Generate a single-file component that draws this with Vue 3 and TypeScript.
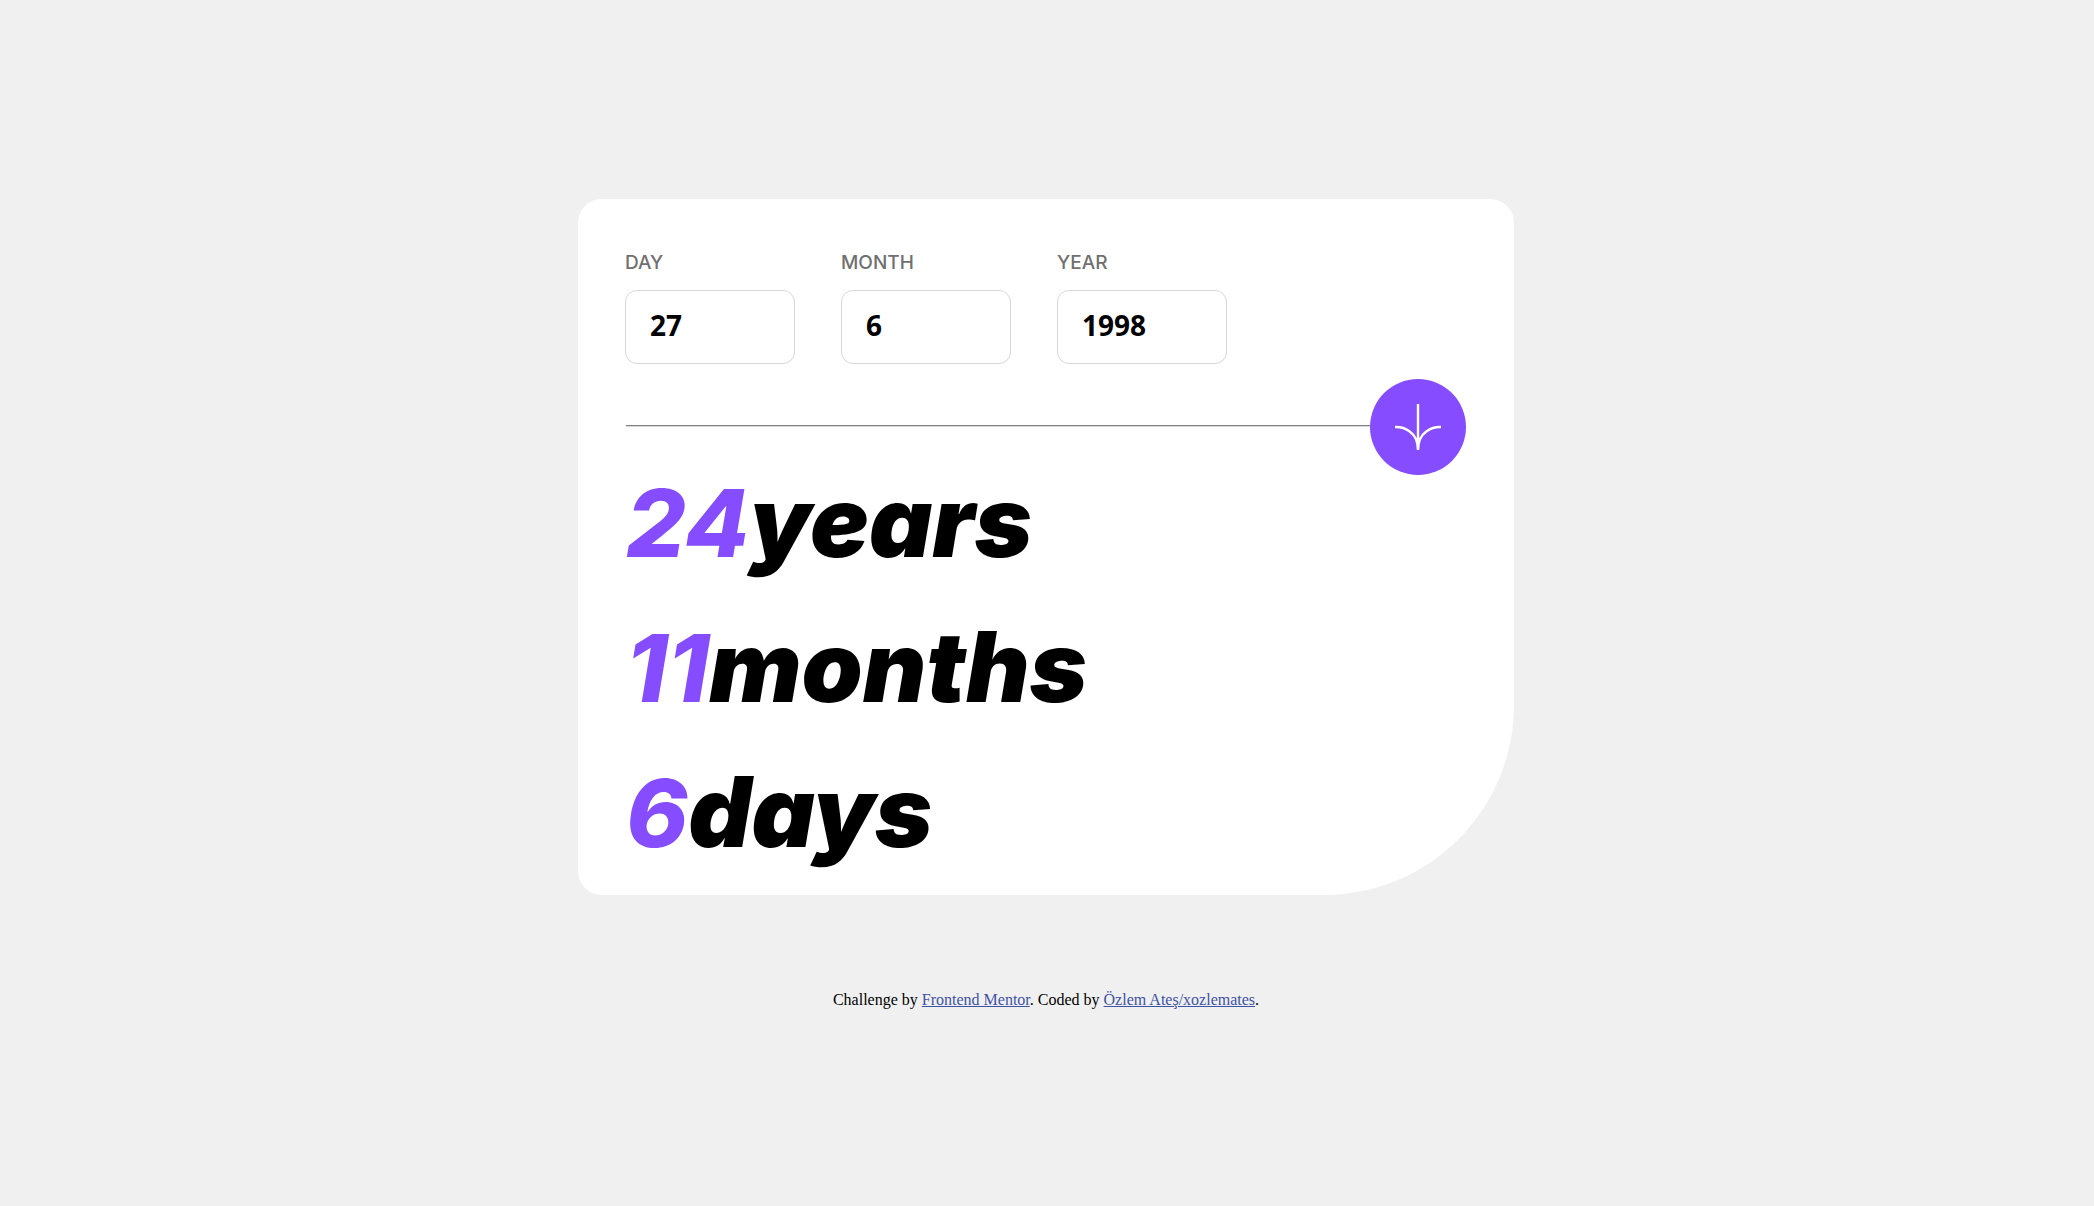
<script setup lang="ts">
import { reactive, ref } from 'vue'

interface Field {
  id: 'day' | 'month' | 'year'
  label: string
}

interface AgePart {
  unit: string
  value: number
}

const fields: Field[] = [
  { id: 'day', label: 'DAY' },
  { id: 'month', label: 'MONTH' },
  { id: 'year', label: 'YEAR' },
]

const birth = reactive({ day: '27', month: '6', year: '1998' })

const age = ref<AgePart[]>([
  { unit: 'years', value: 24 },
  { unit: 'months', value: 11 },
  { unit: 'days', value: 6 },
])

function calculate(): void {
  const now = new Date()
  let years = now.getFullYear() - Number(birth.year)
  let months = now.getMonth() + 1 - Number(birth.month)
  let days = now.getDate() - Number(birth.day)
  if (days < 0) {
    months -= 1
    days += new Date(now.getFullYear(), now.getMonth(), 0).getDate()
  }
  if (months < 0) {
    years -= 1
    months += 12
  }
  age.value = [
    { unit: 'years', value: years },
    { unit: 'months', value: months },
    { unit: 'days', value: days },
  ]
}
</script>

<template>
  <div class="page">
    <main class="card">
      <form @submit.prevent="calculate">
        <div class="fields">
          <div v-for="field in fields" :key="field.id" class="field">
            <label :for="field.id">{{ field.label }}</label>
            <input :id="field.id" v-model="birth[field.id]" type="text" inputmode="numeric" />
          </div>
        </div>
        <div class="divider">
          <hr />
          <button type="submit" aria-label="Calculate age">
            <svg width="48" height="46" viewBox="0 0 46 44" fill="none" stroke="#fff" stroke-width="2.3">
              <path d="M1 22.019C8.333 21.686 23 25.616 23 44M23 44V0M45 22.019C37.667 21.686 23 25.616 23 44" />
            </svg>
          </button>
        </div>
      </form>
      <section class="results">
        <p v-for="part in age" :key="part.unit"><span>{{ part.value }}</span>{{ part.unit }}</p>
      </section>
    </main>
    <footer>
      Challenge by <a href="https://www.frontendmentor.io">Frontend Mentor</a>. Coded by
      <a href="https://github.com/xozlemates">Özlem Ateş/xozlemates</a>.
    </footer>
  </div>
</template>

<style>
body {
  background: #f0f0f0;
}
</style>

<style scoped>
.page {
  box-sizing: border-box;
  min-height: 100vh;
  padding-right: 2px;
  display: flex;
  flex-direction: column;
  align-items: center;
  justify-content: center;
}

.card {
  box-sizing: border-box;
  width: 100%;
  max-width: 936px;
  padding: 49px 48px 36px;
  background: #fff;
  border-radius: 24px 24px 190px 24px;
}

.fields {
  display: flex;
  gap: 46px;
  margin-left: -1px;
}

.field {
  display: flex;
  flex-direction: column;
  gap: 12px;
}

label {
  color: #716f6f;
  font: 500 19px/30px Inter, sans-serif;
}

input {
  box-sizing: border-box;
  width: 170px;
  height: 74px;
  padding: 0 24px 4px;
  border: 1px solid #d8d8d8;
  border-radius: 12px;
  background: #fff;
  color: #000;
  font: 700 28px/40px "Open Sans", sans-serif;
}

.divider {
  display: flex;
  align-items: center;
  margin-top: 15px;
}

hr {
  flex: 1;
  height: 0;
  margin: 0 0 2px;
  border: 0;
  border-top: 1px solid #808080;
  border-bottom: 1px solid #d8d8d8;
}

button {
  display: grid;
  place-items: center;
  width: 96px;
  height: 96px;
  padding: 0;
  border: 0;
  border-radius: 50%;
  background: #854dff;
  cursor: pointer;
}

.results {
  display: flex;
  flex-direction: column;
  gap: 51px;
  color: #000;
  font: italic 900 98px/94px Inter, sans-serif;
}

.results p {
  margin: 0;
}

.results span {
  color: #854dff;
  font-size: 94px;
  font-weight: 800;
  line-height: 90px;
}

footer {
  margin-top: 98px;
  font: 16px/14px "Liberation Serif", serif;
}

footer a {
  color: #3e52a3;
}
</style>
